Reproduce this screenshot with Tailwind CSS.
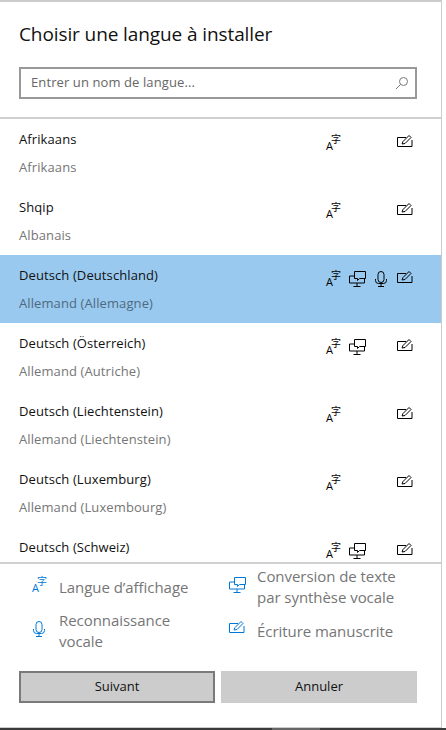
<!DOCTYPE html>
<html lang="fr">
<head>
  <meta charset="UTF-8">
  <title>Choisir une langue</title>
  <script src="https://cdn.jsdelivr.net/npm/@tailwindcss/browser@4"></script>
</head>
<body class="h-[730px] w-[446px] overflow-hidden bg-white font-['Open_Sans',sans-serif]">
  <!-- Fenêtre -->
  <div class="flex h-[728px] w-[442px] flex-col border-r border-b border-t-2 border-[#cccccc] bg-white">
    <!-- En-tête -->
    <div class="h-[117px] shrink-0 border-b-2 border-[#d0d0d0] px-[19px] pt-[18px]">
      <h1 class="h-[28px] text-[19px] leading-[28px] tracking-[-0.1px] text-[#111]">Choisir une langue à installer</h1>
      <div class="mt-[19px] flex h-[32px] w-[398px] items-center justify-between border-2 border-[#999] pl-[10px] pr-[6px]">
        <span class="text-[13px] tracking-[0.1px] text-[#666]">Entrer un nom de langue...</span>
        <svg class="h-[14px] w-[14px]" viewBox="0 0 14 14" fill="none" stroke="#777" stroke-width="1"><circle cx="8.500" cy="5.500" r="4"/><path d="M5.500 8.500 1 13"/></svg>
      </div>
    </div>

    <!-- Liste -->
    <div class="h-[443px] shrink-0 overflow-hidden">
      <div class="flex h-[68px] pl-[19px] pr-[24px]">
        <div class="flex-1 pt-[6px] text-[13px] leading-[28px] tracking-[0.1px]"><p class="text-[#111]">Afrikaans</p><p class="text-[#767676]">Afrikaans</p></div>
        <div class="grid w-[96px] grid-cols-4 place-items-center self-start pt-[15px] text-black">
          <svg class="h-[18px] w-[18px] overflow-visible" viewBox="0 0 18 18" fill="currentColor"><text x="2" y="16" font-size="11" font-family="Open Sans">A</text><text x="7" y="9" font-size="10" font-family="Noto Sans CJK SC">字</text></svg>
          <span></span><span></span>
          <svg class="mb-[3px] h-[13px] w-[16px]" viewBox="0 0 16 13" fill="none" stroke="currentColor"><path d="M9 2.500H.5v9h14.500V5M5 9l1-2.500 6-6 2 2-6 6z"/></svg>
        </div>
      </div>
      <div class="flex h-[68px] pl-[19px] pr-[24px]">
        <div class="flex-1 pt-[6px] text-[13px] leading-[28px] tracking-[0.1px]"><p class="text-[#111]">Shqip</p><p class="text-[#767676]">Albanais</p></div>
        <div class="grid w-[96px] grid-cols-4 place-items-center self-start pt-[15px] text-black">
          <svg class="h-[18px] w-[18px] overflow-visible" viewBox="0 0 18 18" fill="currentColor"><text x="2" y="16" font-size="11" font-family="Open Sans">A</text><text x="7" y="9" font-size="10" font-family="Noto Sans CJK SC">字</text></svg>
          <span></span><span></span>
          <svg class="mb-[3px] h-[13px] w-[16px]" viewBox="0 0 16 13" fill="none" stroke="currentColor"><path d="M9 2.500H.5v9h14.500V5M5 9l1-2.500 6-6 2 2-6 6z"/></svg>
        </div>
      </div>
      <div class="flex h-[68px] bg-[#99c9ef] pl-[19px] pr-[24px]">
        <div class="flex-1 pt-[6px] text-[13px] leading-[28px] tracking-[0.1px]"><p class="text-[#111]">Deutsch (Deutschland)</p><p class="text-[#4f6a80]">Allemand (Allemagne)</p></div>
        <div class="grid w-[96px] grid-cols-4 place-items-center self-start pt-[15px] text-black">
          <svg class="h-[18px] w-[18px] overflow-visible" viewBox="0 0 18 18" fill="currentColor"><text x="2" y="16" font-size="11" font-family="Open Sans">A</text><text x="7" y="9" font-size="10" font-family="Noto Sans CJK SC">字</text></svg>
          <svg class="h-[16px] w-[17px]" viewBox="0 0 17 16" fill="none" stroke="currentColor"><path d="M5.500 5H.5v7h15V7M5.500 .5h11v7h-6l-2 2v-2h-3zM8 12v3M4.500 15.500h7"/></svg>
          <svg class="h-[16px] w-[12px]" viewBox="0 0 12 16" fill="none" stroke="currentColor"><rect x="3" y=".5" width="6" height="11" rx="3"/><path d="M.5 8v1.500a3 3 0 0 0 3 3h5a3 3 0 0 0 3-3V8M6 12.500v3M3 15.500h6"/></svg>
          <svg class="mb-[3px] h-[13px] w-[16px]" viewBox="0 0 16 13" fill="none" stroke="currentColor"><path d="M9 2.500H.5v9h14.500V5M5 9l1-2.500 6-6 2 2-6 6z"/></svg>
        </div>
      </div>
      <div class="flex h-[68px] pl-[19px] pr-[24px]">
        <div class="flex-1 pt-[6px] text-[13px] leading-[28px] tracking-[0.1px]"><p class="text-[#111]">Deutsch (Österreich)</p><p class="text-[#767676]">Allemand (Autriche)</p></div>
        <div class="grid w-[96px] grid-cols-4 place-items-center self-start pt-[15px] text-black">
          <svg class="h-[18px] w-[18px] overflow-visible" viewBox="0 0 18 18" fill="currentColor"><text x="2" y="16" font-size="11" font-family="Open Sans">A</text><text x="7" y="9" font-size="10" font-family="Noto Sans CJK SC">字</text></svg>
          <svg class="h-[16px] w-[17px]" viewBox="0 0 17 16" fill="none" stroke="currentColor"><path d="M5.500 5H.5v7h15V7M5.500 .5h11v7h-6l-2 2v-2h-3zM8 12v3M4.500 15.500h7"/></svg>
          <span></span>
          <svg class="mb-[3px] h-[13px] w-[16px]" viewBox="0 0 16 13" fill="none" stroke="currentColor"><path d="M9 2.500H.5v9h14.500V5M5 9l1-2.500 6-6 2 2-6 6z"/></svg>
        </div>
      </div>
      <div class="flex h-[68px] pl-[19px] pr-[24px]">
        <div class="flex-1 pt-[6px] text-[13px] leading-[28px] tracking-[0.1px]"><p class="text-[#111]">Deutsch (Liechtenstein)</p><p class="text-[#767676]">Allemand (Liechtenstein)</p></div>
        <div class="grid w-[96px] grid-cols-4 place-items-center self-start pt-[15px] text-black">
          <svg class="h-[18px] w-[18px] overflow-visible" viewBox="0 0 18 18" fill="currentColor"><text x="2" y="16" font-size="11" font-family="Open Sans">A</text><text x="7" y="9" font-size="10" font-family="Noto Sans CJK SC">字</text></svg>
          <span></span><span></span>
          <svg class="mb-[3px] h-[13px] w-[16px]" viewBox="0 0 16 13" fill="none" stroke="currentColor"><path d="M9 2.500H.5v9h14.500V5M5 9l1-2.500 6-6 2 2-6 6z"/></svg>
        </div>
      </div>
      <div class="flex h-[68px] pl-[19px] pr-[24px]">
        <div class="flex-1 pt-[6px] text-[13px] leading-[28px] tracking-[0.1px]"><p class="text-[#111]">Deutsch (Luxemburg)</p><p class="text-[#767676]">Allemand (Luxembourg)</p></div>
        <div class="grid w-[96px] grid-cols-4 place-items-center self-start pt-[15px] text-black">
          <svg class="h-[18px] w-[18px] overflow-visible" viewBox="0 0 18 18" fill="currentColor"><text x="2" y="16" font-size="11" font-family="Open Sans">A</text><text x="7" y="9" font-size="10" font-family="Noto Sans CJK SC">字</text></svg>
          <span></span><span></span>
          <svg class="mb-[3px] h-[13px] w-[16px]" viewBox="0 0 16 13" fill="none" stroke="currentColor"><path d="M9 2.500H.5v9h14.500V5M5 9l1-2.500 6-6 2 2-6 6z"/></svg>
        </div>
      </div>
      <div class="flex h-[68px] pl-[19px] pr-[24px]">
        <div class="flex-1 pt-[6px] text-[13px] leading-[28px] tracking-[0.1px]"><p class="text-[#111]">Deutsch (Schweiz)</p></div>
        <div class="grid w-[96px] grid-cols-4 place-items-center self-start pt-[15px] text-black">
          <svg class="h-[18px] w-[18px] overflow-visible" viewBox="0 0 18 18" fill="currentColor"><text x="2" y="16" font-size="11" font-family="Open Sans">A</text><text x="7" y="9" font-size="10" font-family="Noto Sans CJK SC">字</text></svg>
          <svg class="h-[16px] w-[17px]" viewBox="0 0 17 16" fill="none" stroke="currentColor"><path d="M5.500 5H.5v7h15V7M5.500 .5h11v7h-6l-2 2v-2h-3zM8 12v3M4.500 15.500h7"/></svg>
          <span></span>
          <svg class="mb-[3px] h-[13px] w-[16px]" viewBox="0 0 16 13" fill="none" stroke="currentColor"><path d="M9 2.500H.5v9h14.500V5M5 9l1-2.500 6-6 2 2-6 6z"/></svg>
        </div>
      </div>
    </div>

    <!-- Légende -->
    <div class="flex-1 border-t-2 border-[#d0d0d0] px-[19px] pt-[1px]">
      <div class="grid h-[88px] grid-cols-[198px_1fr] grid-rows-[44px_44px] text-[15px] leading-[21px] tracking-[-0.05px] text-[#767676]">
        <div class="flex items-center gap-[11px] pl-[11px]">
          <span class="mb-[5px] flex w-[18px] shrink-0 justify-center text-[#0078d7]"><svg class="h-[18px] w-[18px] overflow-visible" viewBox="0 0 18 18" fill="currentColor"><text x="2" y="16" font-size="11" font-family="Open Sans">A</text><text x="7" y="9" font-size="10" font-family="Noto Sans CJK SC">字</text></svg></span>
          <span>Langue d’affichage</span>
        </div>
        <div class="flex items-center gap-[11px] pl-[11px]">
          <span class="mb-[5px] flex w-[18px] shrink-0 justify-center text-[#0078d7]"><svg class="h-[16px] w-[17px]" viewBox="0 0 17 16" fill="none" stroke="currentColor"><path d="M5.500 5H.5v7h15V7M5.500 .5h11v7h-6l-2 2v-2h-3zM8 12v3M4.500 15.500h7"/></svg></span>
          <span>Conversion de texte<br>par synthèse vocale</span>
        </div>
        <div class="flex items-center gap-[11px] pl-[11px]">
          <span class="mb-[5px] flex w-[18px] shrink-0 justify-center text-[#0078d7]"><svg class="h-[16px] w-[12px]" viewBox="0 0 12 16" fill="none" stroke="currentColor"><rect x="3" y=".5" width="6" height="11" rx="3"/><path d="M.5 8v1.500a3 3 0 0 0 3 3h5a3 3 0 0 0 3-3V8M6 12.500v3M3 15.500h6"/></svg></span>
          <span>Reconnaissance<br>vocale</span>
        </div>
        <div class="flex items-center gap-[11px] pl-[11px]">
          <span class="mb-[7px] flex w-[18px] shrink-0 justify-center text-[#0078d7]"><svg class="h-[13px] w-[16px]" viewBox="0 0 16 13" fill="none" stroke="currentColor"><path d="M9 2.500H.5v9h14.500V5M5 9l1-2.500 6-6 2 2-6 6z"/></svg></span>
          <span>Écriture manuscrite</span>
        </div>
      </div>
      <!-- Boutons -->
      <div class="mt-[18px] grid w-[398px] grid-cols-2 gap-[6px] text-[13px] text-[#111]">
        <button class="h-[32px] border-2 border-[#7a7a7a] bg-[#cccccc]">Suivant</button>
        <button class="h-[32px] bg-[#cccccc]">Annuler</button>
      </div>
    </div>
  </div>
  <!-- Barre des tâches -->
  <div class="flex h-[2px] w-full bg-[#3a3a3a]"><div class="ml-[272px] w-[48px] bg-[#666]"></div></div>
</body>
</html>
